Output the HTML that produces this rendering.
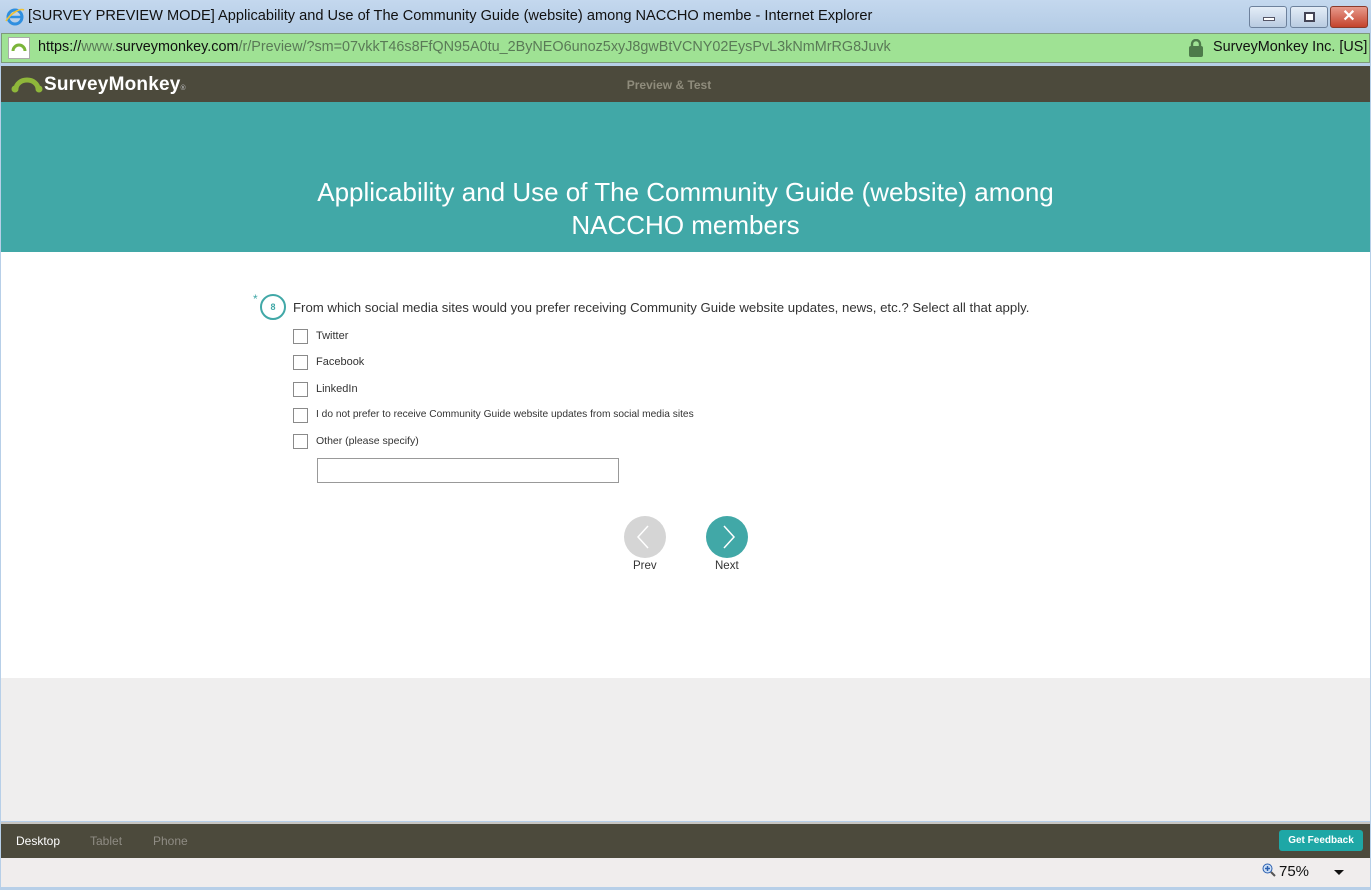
<!DOCTYPE html>
<html><head><style>
*{margin:0;padding:0;box-sizing:border-box}
body{width:1371px;height:890px;overflow:hidden;background:#b7cfe8;font-family:"Liberation Sans",sans-serif;position:relative}
.abs{position:absolute;white-space:nowrap}
.title{left:0;top:0;width:1371px;height:33px;background:linear-gradient(#c4d8ee,#b3cbe5)}
.title span{position:absolute;left:28px;top:8px;font-size:14.6px;color:#111}
.btn{top:6px;height:22px;border:1px solid #6d819c;border-radius:3px;background:linear-gradient(#e4edf7,#b9cbe1)}
.addr{left:1px;top:33px;width:1369px;height:30px;background:#9fe294;border:1px solid #7d9a7a}
.addr .u{position:absolute;left:36px;top:5px;font-size:14.4px;color:#5a7a57}
.addr .u b{font-weight:normal;color:#111}
.hdr{left:1px;top:66px;width:1369px;height:36px;background:#4c4a3c}
.teal{left:1px;top:102px;width:1369px;height:150px;background:#41a8a7;color:#fff;text-align:center;font-size:26px;line-height:33px;padding-top:74px}
.white{left:1px;top:252px;width:1369px;height:426px;background:#fff}
.gray{left:1px;top:678px;width:1369px;height:143px;background:#efeeee}
.foot{left:1px;top:822px;width:1369px;height:36px;background:#4c4a3c;border-top:2px solid #c8c6c3}
.status{left:1px;top:858px;width:1369px;height:29px;background:#f0eded}
.cb{position:absolute;left:293px;width:15px;height:15px;border:1px solid #8a8a8a;background:#fff}
.lbl{position:absolute;left:316px;font-size:11px;color:#333;white-space:nowrap}
</style></head><body>
<div class="abs title"><svg class="abs" style="left:5px;top:7px" width="20" height="20"><circle cx="10" cy="10" r="7" fill="none" stroke="#2f8fe0" stroke-width="3"/><path d="M4 10h13" stroke="#2f8fe0" stroke-width="2.5"/><path d="M1 14c5-8 14-13 18-11" stroke="#f1c232" stroke-width="1.6" fill="none"/></svg><span>[SURVEY PREVIEW MODE] Applicability and Use of The Community Guide (website) among NACCHO membe - Internet Explorer</span></div>
<div class="abs btn" style="left:1249px;width:38px"><div class="abs" style="left:13px;top:10px;width:12px;height:4px;background:#fff;border:1px solid #556"></div></div>
<div class="abs btn" style="left:1290px;width:38px"><div class="abs" style="left:13px;top:5px;width:11px;height:10px;border:2px solid #445;background:#fff"></div></div>
<div class="abs btn" style="left:1330px;width:38px;background:linear-gradient(#e79a8c,#c4432d);border-color:#8a3a2c;color:#fff;font-weight:bold;text-align:center;font-size:16px;line-height:20px">✕</div>
<div class="abs addr"><div class="abs" style="left:6px;top:3px;width:22px;height:22px;background:#fff;border:1px solid #aaa"><svg width="20" height="20"><path d="M4 13a6 6 0 0 1 12 0" stroke="#7bb53a" stroke-width="3" fill="none"/></svg></div><div class="u"><b>https://</b>www.<b>surveymonkey.com</b>/r/Preview/?sm=07vkkT46s8FfQN95A0tu_2ByNEO6unoz5xyJ8gwBtVCNY02EysPvL3kNmMrRG8Juvk</div>
<svg class="abs" style="left:1186px;top:5px" width="16" height="18"><rect x="1" y="7" width="14" height="11" rx="2" fill="#4d7a4a"/><path d="M4 8V5a4 4 0 0 1 8 0v3" stroke="#4d7a4a" stroke-width="2.4" fill="none"/></svg>
<div class="abs" style="left:1211px;top:5px;font-size:14.4px;color:#111">SurveyMonkey Inc. [US]</div></div>
<div class="abs hdr"><svg class="abs" style="left:10px;top:8px" width="32" height="20"><path d="M5 15a11 9 0 0 1 22 0" stroke="#8fb73a" stroke-width="5" fill="none"/><circle cx="4" cy="15" r="3.5" fill="#8fb73a"/><circle cx="28" cy="15" r="3.5" fill="#8fb73a"/></svg><div class="abs" style="left:43px;top:8px;color:#fff;font-size:19px;font-weight:bold;letter-spacing:0.2px">SurveyMonkey<span style="font-size:7px;color:#aaa">®</span></div><div class="abs" style="left:0;width:1336px;top:12px;text-align:center;font-size:12px;font-weight:bold;color:#8f8c7c">Preview &amp; Test</div></div>
<div class="abs teal">Applicability and Use of The Community Guide (website) among<br>NACCHO members</div>
<div class="abs white"></div>
<div class="abs" style="left:253px;top:292px;color:#41a8a7;font-size:12px">*</div>
<div class="abs" style="left:260px;top:294px;width:26px;height:26px;border:2px solid #41a8a7;border-radius:50%;color:#41a8a7;font-size:9px;font-weight:bold;text-align:center;line-height:22px">8</div>
<div class="abs" style="left:293px;top:300px;font-size:13.2px;color:#333">From which social media sites would you prefer receiving Community Guide website updates, news, etc.? Select all that apply.</div>
<div class="cb" style="top:329px"></div><div class="lbl" style="top:330px">Twitter</div>
<div class="cb" style="top:355px"></div><div class="lbl" style="top:356px">Facebook</div>
<div class="cb" style="top:382px"></div><div class="lbl" style="top:383px">LinkedIn</div>
<div class="cb" style="top:408px"></div><div class="lbl" style="top:409px;font-size:10.2px">I do not prefer to receive Community Guide website updates from social media sites</div>
<div class="cb" style="top:434px"></div><div class="lbl" style="top:435px;font-size:10.5px">Other (please specify)</div>
<div class="abs" style="left:317px;top:458px;width:302px;height:25px;border:1px solid #999;background:#fff"></div>
<div class="abs" style="left:624px;top:516px;width:42px;height:42px;border-radius:50%;background:#d5d5d5"><svg width="42" height="42"><path d="M24 10 14 21l10 11" stroke="#fff" stroke-width="1.5" fill="none"/></svg></div>
<div class="abs" style="left:706px;top:516px;width:42px;height:42px;border-radius:50%;background:#41a8a7"><svg width="42" height="42"><path d="M18 10l10 11-10 11" stroke="#fff" stroke-width="1.5" fill="none"/></svg></div>
<div class="abs" style="left:633px;top:560px;font-size:11.5px;color:#333">Prev</div>
<div class="abs" style="left:715px;top:560px;font-size:11.5px;color:#333">Next</div>
<div class="abs gray"></div>
<div class="abs foot"><div class="abs" style="left:15px;top:10px;font-size:12px;color:#fff">Desktop</div><div class="abs" style="left:89px;top:10px;font-size:12px;color:#8f8c84">Tablet</div><div class="abs" style="left:152px;top:10px;font-size:12px;color:#8f8c84">Phone</div>
<div class="abs" style="left:1278px;top:6px;width:84px;height:21px;background:#1ea7a6;border-radius:3px;color:#fff;font-size:10px;font-weight:bold;text-align:center;line-height:21px">Get Feedback</div></div>
<div class="abs status"><svg class="abs" style="left:1261px;top:5px" width="14" height="14"><circle cx="5.5" cy="5.5" r="4.5" fill="#cfe0f5" stroke="#2a5fb0"/><path d="M3 5.5h5M5.5 3v5" stroke="#2a5fb0" stroke-width="1.5"/><path d="M9 9l4 4" stroke="#555" stroke-width="2"/></svg><div class="abs" style="left:1278px;top:5px;font-size:15px;color:#111">75%</div><div class="abs" style="left:1333px;top:12px;border:5px solid transparent;border-top:5px solid #111"></div></div>
</body></html>
